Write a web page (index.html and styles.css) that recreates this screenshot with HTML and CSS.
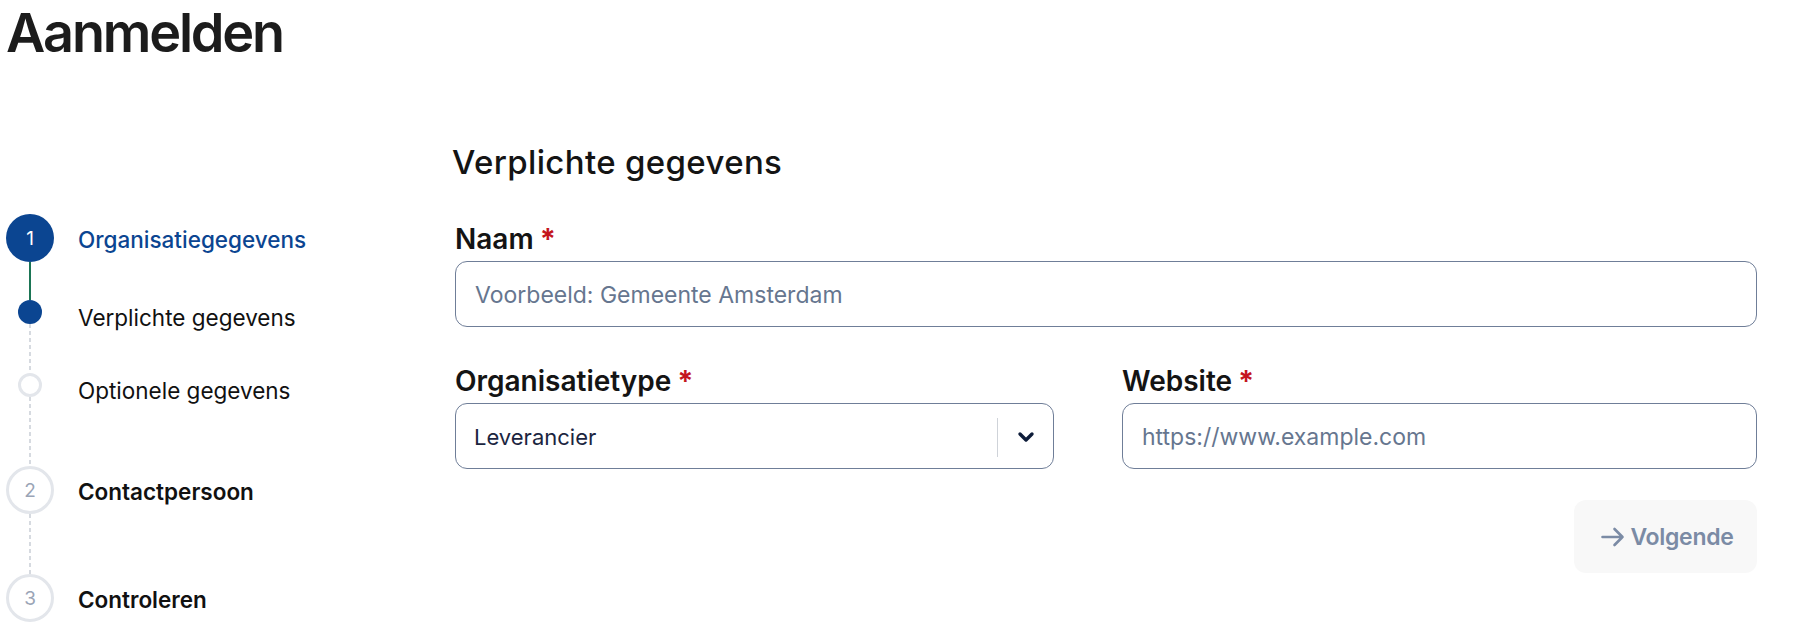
FILE: index.html
```html
<!DOCTYPE html>
<html lang="nl">
<head>
<meta charset="utf-8">
<title>Aanmelden</title>
<link rel="stylesheet" href="styles.css">
</head>
<body>
<div class="page">
  <h1 class="title">Aanmelden</h1>
  <div class="layout">
    <nav class="stepper">
      <div class="step">
        <div class="ind"><span class="circle active">1</span></div>
        <span class="step-label current">Organisatiegegevens</span>
      </div>
      <div class="conn conn-done h38"></div>
      <div class="step sub">
        <div class="ind"><span class="dot filled"></span></div>
        <span class="sub-label">Verplichte gegevens</span>
      </div>
      <div class="conn conn-todo h49"></div>
      <div class="step sub">
        <div class="ind"><span class="dot ring"></span></div>
        <span class="sub-label">Optionele gegevens</span>
      </div>
      <div class="conn conn-todo h69"></div>
      <div class="step">
        <div class="ind"><span class="circle idle">2</span></div>
        <span class="step-label">Contactpersoon</span>
      </div>
      <div class="conn conn-todo h60"></div>
      <div class="step">
        <div class="ind"><span class="circle idle">3</span></div>
        <span class="step-label">Controleren</span>
      </div>
    </nav>
    <main class="form">
      <h2 class="form-title">Verplichte gegevens</h2>
      <div class="field first">
        <label class="label">Naam<span class="req">*</span></label>
        <input class="input" type="text" placeholder="Voorbeeld: Gemeente Amsterdam">
      </div>
      <div class="row">
        <div class="field col-left">
          <label class="label">Organisatietype<span class="req">*</span></label>
          <div class="select">
            <span class="select-value">Leverancier</span>
            <span class="select-sep"></span>
            <span class="select-btn">
              <svg width="18" height="12" viewBox="0 0 18 12"><path d="M3 3 L9 9 L15 3" fill="none" stroke="#0e1d3a" stroke-width="3.4" stroke-linecap="round" stroke-linejoin="round"/></svg>
            </span>
          </div>
        </div>
        <div class="field col-right">
          <label class="label">Website<span class="req">*</span></label>
          <input class="input" type="text" placeholder="https://www.example.com">
        </div>
      </div>
      <div class="actions">
        <button class="btn-next" type="button">
          <svg width="24" height="20" viewBox="0 0 24 20"><path d="M1.5 10 H21.5 M13.5 2 L21.5 10 L13.5 18" fill="none" stroke="#7b8ba5" stroke-width="2.6" stroke-linecap="round" stroke-linejoin="round"/></svg>
          <span>Volgende</span>
        </button>
      </div>
    </main>
  </div>
</div>
</body>
</html>
```

FILE: styles.css
```css
* { box-sizing: border-box; }

html, body {
  margin: 0;
  padding: 0;
  background: #ffffff;
}

body {
  font-family: "Inter", "Liberation Sans", sans-serif;
  color: #141414;
}

.page {
  padding-left: 6px;
  padding-right: 38px;
}

.title {
  margin: -1px 0 0 0;
  font-size: 54px;
  font-weight: 580;
  line-height: 68px;
  color: #1c1c1c;
  letter-spacing: -2.2px;
}

.layout {
  display: flex;
  margin-top: 75px;
}

/* stepper */
.stepper {
  width: 449px;
  flex: 0 0 449px;
  padding-top: 72px;
  display: flex;
  flex-direction: column;
}

.step {
  display: flex;
  align-items: center;
  gap: 24px;
  height: 48px;
}

.step.sub { height: 24px; }

.ind {
  width: 48px;
  display: flex;
  justify-content: center;
  align-items: center;
}

.circle {
  width: 48px;
  height: 48px;
  border-radius: 50%;
  display: flex;
  align-items: center;
  justify-content: center;
  font-size: 19px;
  font-weight: 400;
}

.circle.active {
  background: #0b4591;
  color: #ffffff;
}

.circle.idle {
  background: #ffffff;
  border: 3px solid #e3e6eb;
  color: #9aa4b6;
}

.dot {
  width: 24px;
  height: 24px;
  border-radius: 50%;
}

.dot.filled { background: #0b4591; }

.dot.ring {
  background: #ffffff;
  border: 3px solid #e3e6eb;
}

.step-label {
  font-size: 22.5px;
  font-weight: 600;
  line-height: 26px;
  color: #111111;
  margin-top: 3px;
}

.step-label.current {
  color: #0b4591;
  font-weight: 500;
}

.sub-label {
  font-size: 22.5px;
  font-weight: 400;
  line-height: 26px;
  color: #111111;
  margin-top: 12px;
}

.conn {
  width: 2px;
  margin-left: 23px;
}

.conn-done { background: #1b7555; }

.conn-todo {
  background: repeating-linear-gradient(to bottom, #d6dae0 0 4px, transparent 4px 7px);
}

.h38 { height: 38px; }
.h49 { height: 49px; }
.h60 { height: 60px; }
.h69 { height: 69px; }

/* form */
.form {
  flex: 1;
  min-width: 0;
}

.form-title {
  margin: 0 0 0 -3px;
  font-size: 33px;
  font-weight: 500;
  line-height: 40px;
  color: #141414;
  letter-spacing: 0.35px;
}

.field {
  display: flex;
  flex-direction: column;
}

.field.first { margin-top: 41px; }

.label {
  font-size: 28px;
  font-weight: 600;
  line-height: 32px;
  color: #141414;
  margin-bottom: 6px;
  letter-spacing: 0;
}

.req {
  color: #c4161c;
  margin-left: 6px;
  font-weight: 700;
  font-size: 29px;
}

.input {
  height: 66px;
  width: 100%;
  border: 1px solid #6f7e98;
  border-radius: 12px;
  padding: 2px 19px 0 19px;
  font-family: "Inter", "Liberation Sans", sans-serif;
  font-size: 23px;
  color: #1b2540;
  outline: none;
  background: #ffffff;
}

.input::placeholder {
  color: #66768f;
  opacity: 1;
}

.row {
  display: flex;
  gap: 68px;
  margin-top: 38px;
}

.col-left { width: 599px; flex: 0 0 599px; }
.col-right { flex: 1; min-width: 0; }

.select {
  height: 66px;
  border: 1px solid #6f7e98;
  border-radius: 12px;
  display: flex;
  align-items: center;
  padding-left: 18px;
  padding-top: 2px;
  background: #ffffff;
}

.select-value {
  flex: 1;
  font-size: 22px;
  color: #1b2540;
}

.select-sep {
  width: 1px;
  height: 39px;
  background: #cfd3d9;
}

.select-btn {
  width: 55px;
  display: flex;
  justify-content: center;
  align-items: center;
}

.actions {
  display: flex;
  justify-content: flex-end;
  margin-top: 31px;
}

.btn-next {
  width: 183px;
  height: 73px;
  border: none;
  border-radius: 12px;
  background: #f8f8f8;
  display: flex;
  align-items: center;
  justify-content: center;
  gap: 5px;
  font-family: "Inter", "Liberation Sans", sans-serif;
  font-size: 23px;
  font-weight: 600;
  color: #7b8ba5;
  letter-spacing: -0.3px;
  padding: 0 0 0 4px;
}
```
